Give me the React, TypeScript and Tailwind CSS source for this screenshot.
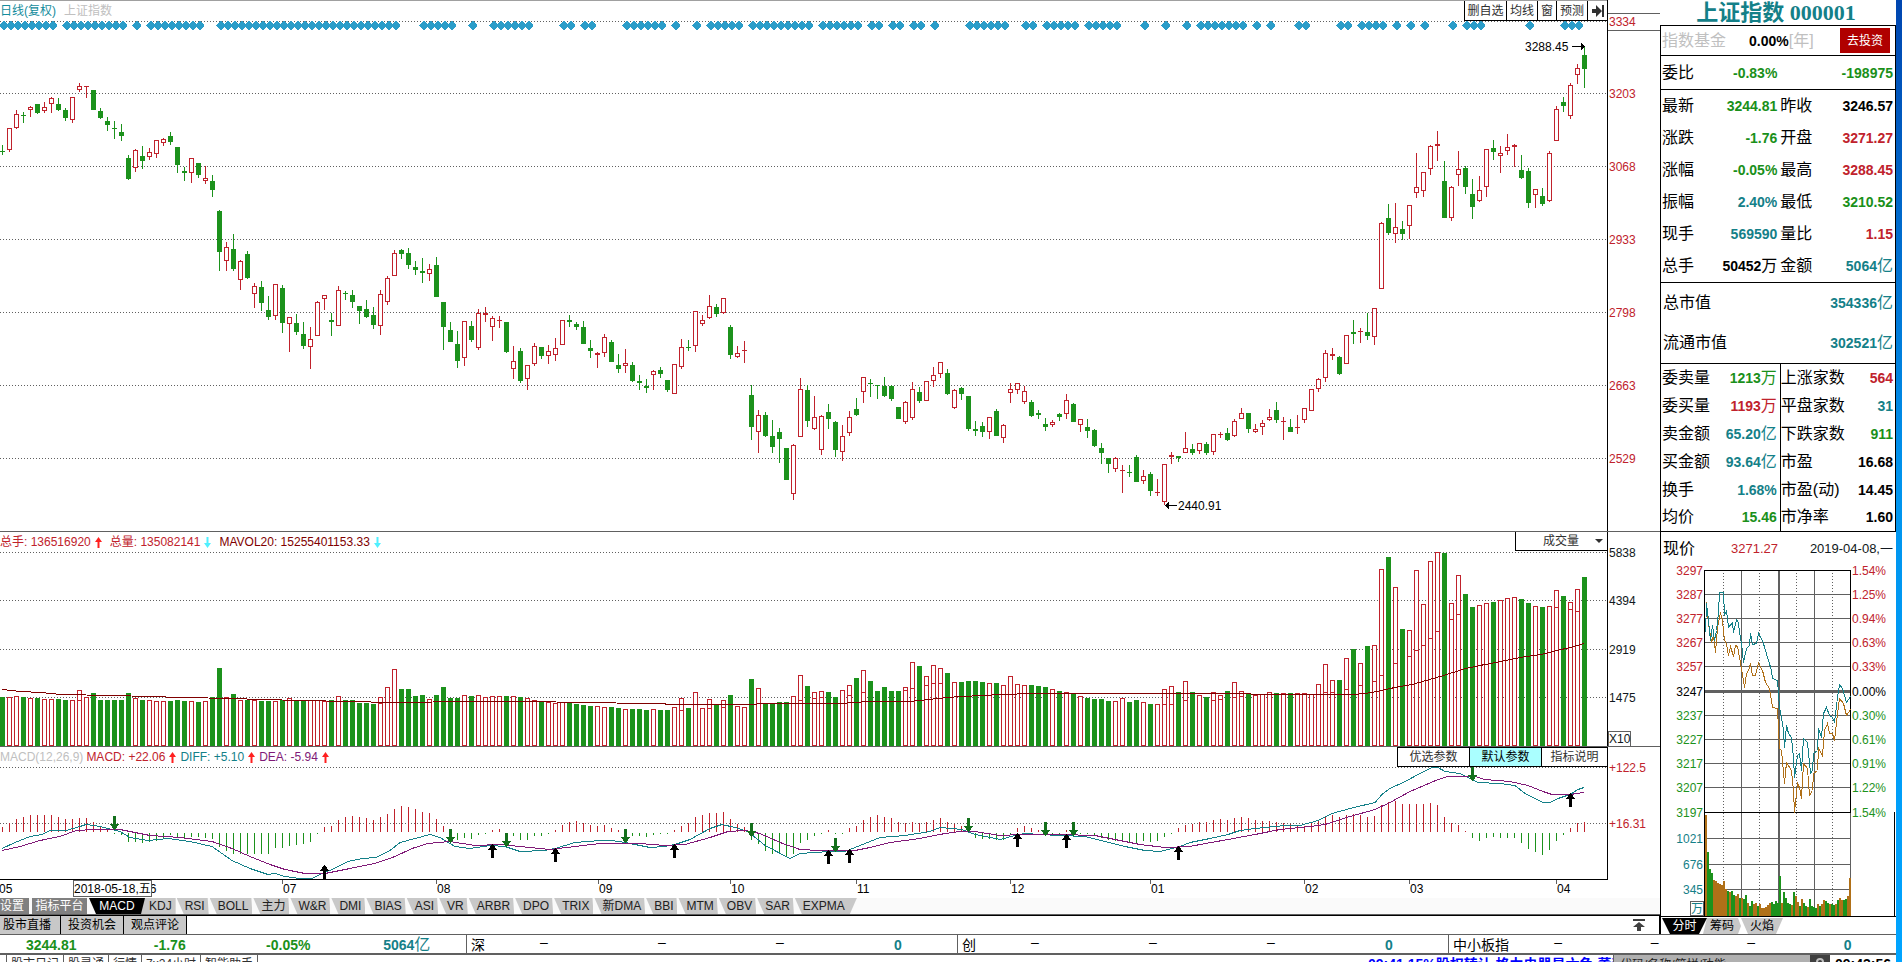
import React from "react";
import clsx from "clsx";

const RED = "#c0222c";
const GREEN = "#1c921c";
const TEAL = "#148088";
const PURPLE = "#801a78";
const GRID = "#606060";
const STEP = 7;

// one candle per trading day: colour, high, body top, body bottom, low
const CANDLES = `
g145,151,152,155 r128,128,150,152 r110,114,128,129 g112,115,116,123 r106,107,110,117 g104,104,113,114 r102,107,111,113 r97,98,104,113 g98,104,110,111 g108,110,118,121
r97,97,120,123 r83,86,90,92 r86,86,87,98 g90,90,110,110 g108,111,118,119 g117,121,125,131 g121,128,129,139 g124,132,136,141 g155,158,179,180 r149,150,168,172
g146,156,161,169 r148,152,157,160 r140,140,154,158 r138,139,143,146 g132,136,142,145 g147,147,165,173 g167,171,173,181 r158,158,173,183 g163,163,175,178 r166,178,181,184
g175,181,190,197 g210,211,252,271 r242,247,261,271 g234,249,269,271 r260,261,280,290 g251,254,278,279 r283,286,294,308 g281,287,303,311 g296,310,317,320 r284,284,316,320
g285,288,323,333 r317,317,324,352 g314,323,332,335 g322,334,346,349 r327,339,347,369 r301,302,336,336 r295,295,299,310 g313,320,322,336 r286,290,326,326 g291,293,294,300
g290,295,302,308 g306,306,311,324 g300,309,317,318 g307,315,325,329 r290,294,326,335 r276,278,302,305 r250,253,276,276 g249,250,254,259 g248,253,265,269 g261,267,270,275
g258,271,273,283 r264,269,274,281 g257,265,297,297 g302,302,327,350 g322,330,342,342 g331,344,361,368 r321,321,358,366 g321,326,340,342 r309,313,348,350 r307,313,315,322
r316,318,327,341 r316,320,321,328 g322,322,352,353 r346,361,369,379 g348,351,381,383 r365,365,379,390 r343,346,364,366 g347,347,356,359 r345,351,356,364 r338,348,355,361
r320,320,345,345 g315,320,322,327 g322,324,327,330 g321,327,344,344 g340,348,351,358 r352,353,355,368 r334,337,353,357 g340,342,362,362 g354,365,369,373 r349,363,366,373
g362,365,381,382 g375,381,383,390 g379,386,388,393 r370,371,375,390 g367,370,374,378 g380,380,390,392 r364,364,394,394 r339,347,367,369 g340,347,348,351 r311,311,346,352
r315,320,324,326 r295,306,318,319 g304,307,314,317 r298,298,313,314 g325,327,355,359 r346,353,357,358 r341,350,351,363 g385,395,427,440 r410,415,432,453 g412,415,436,437
g420,436,447,453 g428,432,439,463 g448,448,480,480 r444,445,494,500 r378,389,437,437 g385,390,421,427 r396,417,429,430 r415,416,450,455 g404,412,419,429 g421,422,450,457
r425,436,452,461 r411,417,433,436 g398,409,415,416 r377,377,392,403 g379,383,384,397 g385,385,386,399 g377,386,396,397 g385,386,399,401 g407,407,419,419 r401,402,422,424
r382,389,418,420 g387,392,401,403 r381,381,401,401 r367,375,381,387 r362,362,374,378 g369,373,394,395 r389,390,408,409 g387,388,394,400 g396,396,429,431 g421,429,431,436
g422,426,432,437 r417,417,432,439 g409,411,436,436 r424,425,438,443 r383,389,393,403 r383,383,390,394 r386,391,402,404 g400,402,416,417 g410,413,415,419 g418,424,427,431
r420,422,425,427 g413,414,417,421 r394,400,414,419 g403,404,422,422 r419,419,425,432 g419,427,431,438 g429,430,446,447 g443,448,453,464 g458,458,464,473 r457,458,469,472
r465,470,471,493 g465,472,473,477 g455,457,482,482 r470,476,481,484 g472,474,491,496 r479,492,493,496 r464,464,502,505 r452,455,457,464 g456,456,458,462 r432,448,453,453
g444,449,453,455 r443,443,451,454 g442,444,453,455 r434,434,452,455 r432,434,435,438 g428,433,440,441 r419,421,436,437 r408,413,419,419 g413,413,429,433 r424,429,432,433
r420,423,427,435 r409,417,420,421 g402,410,420,423 r417,421,422,440 g419,427,432,432 r415,427,428,434 r408,408,420,423 r389,389,411,411 r378,379,389,392 r350,353,378,382
r348,354,356,360 g356,357,374,375 r335,335,364,364 g320,332,334,344 r328,331,332,343 g313,332,336,340 r308,308,337,345 r222,223,289,289 g204,218,233,235 r203,227,234,243
g221,229,234,240 r205,205,226,239 r153,187,193,198 r172,172,191,197 r145,146,169,175 r131,144,146,161 g161,181,218,218 r186,187,218,221 r151,169,175,186 g166,168,187,194
g179,194,207,219 r176,190,201,202 r149,149,187,197 g140,148,152,160 r146,153,156,173 r134,147,151,155 r144,145,147,167 g155,170,178,179 g168,171,203,208 r189,189,195,208
g188,196,204,206 r151,153,201,202 r106,109,141,141 g97,102,106,112 r83,85,116,119 r64,68,75,84 g46,55,69,88`
  .trim()
  .split(/\s+/)
  .map((c) => {
    const [high, top, bottom, low] = c.slice(1).split(",").map(Number);
    return { up: c[0] === "r", high, top, bottom, low };
  });

const VOLUMES = [
  49, 49, 50, 49, 48, 48, 47, 47, 47, 46, 46, 56, 49, 53, 46, 46, 46, 46, 53, 48, 46, 46, 45, 45, 45, 46, 45, 45, 44, 45,
  49, 78, 49, 52, 46, 46, 46, 45, 45, 45, 46, 48, 45, 45, 46, 46, 45, 46, 50, 46, 46, 43, 43, 42, 49, 59, 77, 57, 57, 50,
  51, 47, 51, 59, 48, 48, 51, 50, 51, 49, 50, 50, 50, 50, 49, 48, 46, 45, 44, 43, 44, 43, 42, 41, 40, 40, 39, 39, 38, 37,
  37, 37, 36, 37, 36, 36, 39, 48, 38, 54, 38, 47, 42, 46, 51, 40, 39, 67, 58, 43, 43, 44, 44, 50, 71, 60, 54, 55, 54, 49,
  56, 61, 68, 76, 65, 55, 59, 55, 55, 59, 84, 80, 70, 81, 78, 73, 64, 64, 65, 65, 64, 63, 63, 61, 70, 62, 61, 61, 60, 59,
  57, 55, 54, 53, 50, 48, 47, 47, 45, 45, 48, 44, 46, 44, 42, 42, 57, 60, 54, 65, 54, 51, 49, 54, 51, 55, 64, 55, 53, 51,
  52, 54, 53, 53, 53, 53, 53, 52, 62, 82, 66, 66, 88, 97, 83, 100, 101, 177, 189, 159, 117, 116, 176, 142, 185, 194, 193,
  143, 171, 152, 139, 141, 143, 144, 146, 148, 149, 147, 143, 140, 139, 140, 156, 150, 144, 157, 169,
];

// marks inside the hollow bars
const VOLUME_MARKS: [number, number][] = [
  [11, 46], [54, 43], [55, 44], [97, 36], [99, 42], [101, 38], [103, 39], [114, 46], [116, 48], [117, 49], [121, 51],
  [123, 54], [129, 56], [130, 58], [132, 61], [133, 63], [134, 63], [144, 52], [166, 42], [167, 42], [169, 46], [173, 46],
  [174, 47], [176, 49], [177, 50], [189, 54], [190, 54], [192, 57], [194, 61], [196, 65], [197, 71], [199, 83], [201, 90],
  [202, 96], [203, 101], [204, 108], [205, 115], [207, 127], [208, 132], [222, 139], [224, 137], [225, 135],
];

const MACD = [
  5, 9, 13, 15, 17, 17, 17, 17, 15, 13, 13, 14, 14, 10, 6, 4, -1, -2, -9, -9, -10, -9, -8, -6, -2, -4, -5, -4, -4, -5,
  -6, -14, -18, -21, -21, -21, -21, -21, -21, -15, -15, -13, -12, -11, -9, -1, 5, 6, 12, 15, 16, 15, 14, 12, 15, 18, 23, 26,
  25, 23, 20, 19, 13, 6, -8, -7, -5, -6, -2, -1, 2, 3, -2, -3, -7, -7, -3, -3, -1, 2, 7, 10, 11, 9, 7, 6, 7, 4, 2, -2,
  -3, -3, -4, -2, -1, -1, 2, 6, 9, 15, 17, 19, 19, 20, 13, 8, 5, -7, -11, -18, -21, -21, -24, -21, -10, -7, -3, -1, 2, -1,
  -1, 4, 6, 12, 15, 17, 15, 14, 10, 9, 10, 9, 10, 12, 14, 10, 8, 6, 2, -5, -6, -6, -7, -7, -1, 4, 6, 4, 2, -2,
  -1, -1, 2, -2, -1, -1, -3, -5, -7, -8, -8, -9, -11, -8, -9, -8, -4, -1, 4, 7, 8, 10, 10, 12, 13, 12, 14, 15, 14, 12,
  11, 11, 10, 9, 8, 7, 6, 9, 12, 15, 17, 15, 17, 18, 17, 15, 16, 27, 30, 31, 28, 28, 28, 28, 29, 27, 15,
  9, 7, 1, -5, -8, -5, -4, -5, -5, -5, -10, -16, -19, -22, -17, -8, -2, 4, 9, 10,
];

// inclusive day ranges that carry an event diamond
const EVENTS: [number, number][] = [
  [0, 7], [9, 17], [19, 19], [21, 28], [31, 56], [60, 64], [67, 67], [70, 75], [80, 81], [83, 84], [89, 94], [96, 96],
  [99, 99], [101, 105], [107, 115], [117, 122], [124, 125], [127, 128], [130, 131], [133, 133], [138, 143], [146, 147],
  [149, 153], [155, 159], [163, 163], [166, 166], [169, 169], [171, 177], [179, 179], [181, 181], [185, 186], [191, 192],
  [194, 197], [199, 199], [201, 201], [203, 203], [207, 207], [209, 211], [218, 218], [223, 225],
];

const MAVOL =
  "2,157 12,158 20,159 41,160 50,161 62,162 110,163 152,164 180,165 236,166 258,167 306,168 346,169 396,170 470,169 520,169 592,170 640,171 663,171 668,172 725,172 790,171 840,171 868,169 908,169 920,168 938,166 960,164 985,163 1000,162 1035,161 1190,161 1216,161 1285,162 1355,162 1372,160 1390,156 1400,154 1412,152 1440,144 1466,136 1480,133 1506,128 1520,125 1541,122 1557,118 1570,115 1584,111";
const DIFF =
  "2,101 15,95 30,89 42,87 50,83 66,83 80,79 86,77 100,79 120,84 130,90 148,93 168,91 190,94 212,99 232,113 250,121 268,127 275,126 285,129 300,131 312,131 322,126 332,122 348,114 362,111 376,110 390,103 400,95 415,91 430,87 440,90 455,99 470,101 490,98 505,99 520,104 545,103 555,101 575,95 600,93 612,93 625,95 640,98 650,100 665,99 675,97 690,92 710,81 722,77 735,80 748,84 765,98 790,111 800,106 815,105 830,104 845,104 860,98 880,90 905,88 930,84 940,80 962,82 975,87 1000,92 1015,88 1025,86 1040,87 1060,88 1085,89 1105,94 1125,99 1145,103 1160,104 1180,99 1190,95 1210,91 1228,87 1240,83 1255,81 1285,78 1300,78 1318,73 1332,66 1350,61 1375,55 1382,47 1390,41 1405,34 1420,26 1432,20 1438,20 1445,24 1460,26 1466,29 1478,35 1500,36 1515,38 1525,46 1543,55 1550,55 1558,51 1570,47 1578,42 1584,40";
const DEA =
  "2,103 20,99 40,93 60,89 76,83 95,82 120,82 150,88 180,90 212,94 232,101 250,109 270,117 285,122 305,126 325,126 345,122 375,116 395,109 412,101 428,96 450,94 475,98 500,97 520,99 550,102 575,99 600,96 640,96 665,98 685,97 710,90 728,84 745,83 760,86 780,95 800,102 820,103 855,103 870,100 890,95 920,91 945,86 960,84 975,84 1000,88 1020,87 1060,87 1095,88 1120,93 1140,97 1165,100 1190,99 1200,97 1228,92 1255,87 1280,82 1310,79 1325,77 1350,69 1375,62 1390,55 1410,44 1438,32 1448,29 1475,29 1485,32 1510,34 1528,38 1543,44 1552,47 1570,47 1584,45";

// [day, tip]
const SELLS: [number, number][] = [
  [16, 83], [64, 96], [72, 100], [89, 96], [107, 90], [119, 105], [138, 85], [149, 89], [153, 89], [210, 34],
];
const BUYS: [number, number][] = [
  [46, 118], [70, 97], [79, 101], [96, 97], [118, 103], [121, 102], [145, 86], [152, 87], [168, 99], [224, 46],
];

const MONTHS: [string, number][] = [
  ["05", -2], ["06", 142], ["07", 282], ["08", 436], ["09", 598], ["10", 730], ["11", 856], ["12", 1010], ["01", 1150],
  ["02", 1304], ["03", 1409], ["04", 1556],
];

const PRICE_LEVELS: [string, number][] = [
  ["3334", 21], ["3203", 93], ["3068", 166], ["2933", 239], ["2798", 312], ["2663", 385], ["2529", 458],
];
const VOLUME_LEVELS: [string, number][] = [["5838", 20], ["4394", 68], ["2919", 117], ["1475", 165]];
const MACD_LEVELS: [string, number][] = [["+122.5", 20], ["+16.31", 76]];

const INDICATORS = [
  "KDJ", "RSI", "BOLL", "主力", "W&R", "DMI", "BIAS", "ASI", "VR", "ARBR", "DPO", "TRIX", "新DMA", "BBI", "MTM", "OBV",
  "SAR", "EXPMA",
];

function GridLines({ levels }: { levels: [string, number][] }) {
  return (
    <g stroke={GRID} strokeDasharray="1 2">
      {levels.map(([label, y]) => (
        <line key={label} x1="0" x2="100%" y1={y + 0.5} y2={y + 0.5} />
      ))}
    </g>
  );
}

function AxisLabels({ levels, color }: { levels: [string, number][]; color: string }) {
  return (
    <g fill={color} fontSize="12">
      {levels.map(([label, y]) => (
        <text key={label} x="1" y={y + 5}>
          {label}
        </text>
      ))}
    </g>
  );
}

function Trend({ down, className }: { down?: boolean; className: string }) {
  return (
    <svg className={clsx("w-[7px] h-[11px] shrink-0", className)} viewBox="0 0 7 11" fill="currentColor">
      {down ? <path d="M2.500 0h2v6H7L3.500 11 0 6h2.500z" /> : <path d="M3.500 0 7 5H4.500V11h-2V5H0z" />}
    </svg>
  );
}

function PriceChart() {
  return (
    <svg className="block w-full h-[531px]" shapeRendering="crispEdges">
      <rect width="100%" height="1" fill="#a0a0a0" />
      <GridLines levels={PRICE_LEVELS} />
      <g fill="#2b9dc9">
        {EVENTS.flatMap(([from, to]) =>
          Array.from({ length: to - from + 1 }, (_, n) => {
            const x = (from + n) * STEP;
            return <path key={x} d={`M${x + 3} 21h1l4 4v1l-4 4h-1l-4-4v-1z`} />;
          })
        )}
      </g>
      {CANDLES.map(({ up, high, top, bottom, low }, i) => {
        const x = i * STEP;
        const color = up ? RED : GREEN;
        const hollow = up && bottom - top > 2;
        return (
          <g key={i} fill={color}>
            <rect x={x + 2} y={high} width="1" height={low - high} />
            <rect x={x} y={top} width="5" height={bottom - top} />
            {hollow && <rect x={x + 1} y={top + 1} width="3" height={bottom - top - 2} fill="#fff" />}
          </g>
        );
      })}
      <g fontSize="12">
        <text x="1525" y="51">3288.45</text>
        <text x="1178" y="510">2440.91</text>
      </g>
      <path d="M1572 46h9v-3l4 3.500-4 3.500v-3h-9z" />
      <path d="M1177 505h-8v-3l-4 3.500 4 3.500v-3h8z" />
    </svg>
  );
}

function VolumeChart() {
  return (
    <svg className="block w-full h-[214px]" shapeRendering="crispEdges">
      <GridLines levels={VOLUME_LEVELS} />
      {VOLUMES.map((h, i) => {
        const x = i * STEP;
        const up = CANDLES[i]?.up;
        return (
          <g key={i}>
            <rect x={x} y={214 - h} width="5" height={h} fill={up ? RED : GREEN} />
            {up && <rect x={x + 1} y={215 - h} width="3" height={h - 2} fill="#fff" />}
          </g>
        );
      })}
      {VOLUME_MARKS.map(([i, h]) => (
        <rect key={i} x={i * STEP} y={214 - h} width="5" height="1" fill={RED} />
      ))}
      <polyline points={MAVOL} fill="none" stroke="#800000" transform="translate(0 0.5)" />
    </svg>
  );
}

function MacdChart() {
  return (
    <svg className="block w-full h-[132px]" shapeRendering="crispEdges">
      <GridLines levels={MACD_LEVELS} />
      {MACD.map((v, i) => (
        <rect
          key={i}
          x={i * STEP + 2}
          y={v > 0 ? 85 - v : 86}
          width="1"
          height={Math.abs(v)}
          fill={v > 0 ? RED : GREEN}
        />
      ))}
      <g fill="none" transform="translate(0 0.5)">
        <polyline points={DIFF} stroke={TEAL} />
        <polyline points={DEA} stroke={PURPLE} />
      </g>
      {SELLS.map(([i, y]) => (
        <path key={i} d={`M${i * STEP + 1} ${y - 14}h3v8h3l-4 6h-1l-4-6h3z`} fill="#14701c" />
      ))}
      {BUYS.map(([i, y]) => (
        <path key={i} d={`M${i * STEP + 1} ${y + 14}h3v-8h3l-4-6h-1l-4 6h3z`} fill="#000" />
      ))}
    </svg>
  );
}

function DateAxis() {
  return (
    <div className="relative h-[18px]">
      <svg className="block w-full h-full" fontSize="12">
        {MONTHS.map(([label, x]) => (
          <g key={label}>
            <rect x={x} width="1" height="4" fill={GRID} />
            <text x={x + 1} y="13">{label}</text>
          </g>
        ))}
      </svg>
      <div className="absolute left-[73px] top-0 h-[17px] border border-[#606060] bg-white leading-[16px] whitespace-nowrap">
        2018-05-18,五
      </div>
    </div>
  );
}

function ChartArea() {
  return (
    <>
      <section className="flex border-b border-[#606060]">
        <div className="relative flex-1 min-w-0 border-r border-black">
          <PriceChart />
          <div className="absolute left-0 top-[3px] flex gap-2 leading-4">
            <span className="text-[#148c9c]">日线(复权)</span>
            <span className="text-[#c0c0c0]">上证指数</span>
          </div>
          <div className="absolute right-0 top-px flex h-5 border-l border-b border-black bg-white text-[#303030] divide-x divide-black">
            <button className="w-[42px]">删自选</button>
            <button className="w-[31px]">均线</button>
            <button className="w-[19px]">窗</button>
            <button className="w-[31px]">预测</button>
            <button className="w-[19px] flex items-center justify-center" aria-label="最新">
              <svg className="w-3 h-3" viewBox="0 0 12 12" fill="#303030">
                <path d="M0 4h4V0l6 6-6 6V8H0zM10 0h2v12h-2z" />
              </svg>
            </button>
          </div>
        </div>
        <svg className="w-[52px] h-[531px]">
          <path d="M0 13.500h52M0 30.500h52" stroke={GRID} />
          <AxisLabels levels={PRICE_LEVELS} color={RED} />
        </svg>
      </section>

      <section className="flex border-b border-[#606060]">
        <div className="relative flex-1 min-w-0 border-r border-black">
          <VolumeChart />
          <div className="absolute left-0 top-[2px] flex items-center leading-4 whitespace-nowrap">
            <span className="text-[#c0222c]">总手: 136516920</span>
            <Trend className="text-[#ff2020] mx-1" />
            <span className="text-[#c0222c] ml-1">总量: 135082141</span>
            <Trend down className="text-[#50f0ff] mx-1" />
            <span className="text-[#800000] ml-1">MAVOL20: 15255401153.33</span>
            <Trend down className="text-[#50f0ff] mx-1" />
          </div>
          <div className="absolute right-0 top-0 w-[92px] h-[19px] border-l border-b border-black bg-white">
            <select
              aria-label="副图指标"
              className="block w-full h-full appearance-none bg-transparent pl-[27px] text-[#303030] outline-none"
            >
              <option>成交量</option>
            </select>
            <svg className="absolute right-1 top-[7px] w-2 h-1" viewBox="0 0 8 4" fill="#303030">
              <path d="M0 0h8L4 4z" />
            </svg>
          </div>
        </div>
        <div className="relative w-[52px]">
          <svg className="w-full h-[214px]">
            <AxisLabels levels={VOLUME_LEVELS} color="#101820" />
          </svg>
          <span className="absolute left-0 bottom-0 border border-b-0 border-[#606060] text-[#101820] leading-[14px]">X10</span>
        </div>
      </section>

      <section className="flex">
        <div className="relative flex-1 min-w-0 border-r border-b border-black">
          <MacdChart />
          <div className="absolute left-0 top-[2px] flex items-center leading-4 whitespace-nowrap">
            <span className="text-[#c0c0c0] mr-[3px]">MACD(12,26,9)</span>
            <span className="text-[#c0222c]">MACD: +22.06</span>
            <Trend className="text-[#ff2020] mx-1" />
            <span className="text-[#148088]">DIFF: +5.10</span>
            <Trend className="text-[#ff2020] mx-1" />
            <span className="text-[#801a78]">DEA: -5.94</span>
            <Trend className="text-[#ff2020] mx-1" />
          </div>
          <div className="absolute right-0 top-0 flex h-5 border-l border-b border-t border-black bg-white text-[#303030] divide-x divide-black">
            <button className="w-[72px]">优选参数</button>
            <button className="w-[72px] bg-[#aaffff] text-black">默认参数</button>
            <button className="w-[65px]">指标说明</button>
          </div>
        </div>
        <svg className="w-[52px] h-[132px]">
          <AxisLabels levels={MACD_LEVELS} color={RED} />
        </svg>
      </section>
      <DateAxis />
    </>
  );
}

function IndicatorTabs() {
  return (
    <div className="flex h-4 leading-4 bg-[#fafafa]">
      <button className="w-[29px] bg-[#808080] text-white text-left">设置</button>
      <button className="ml-[3px] w-[55px] bg-[#808080] text-white">指标平台</button>
      <button className="relative z-10 ml-[2px] w-[56px] bg-black text-white [clip-path:polygon(0_0,100%_0,calc(100%-4px)_100%,7px_100%)]">
        MACD
      </button>
      {INDICATORS.map((name, i) => (
        <button
          key={name}
          className={clsx(
            "bg-[#c8c8c8] text-[#202020]",
            i === 0 && "-ml-1 pl-2 pr-1 [clip-path:polygon(0_0,100%_0,100%_100%,0_100%)]",
            i > 0 && i < INDICATORS.length - 1 && "ml-px pl-2 pr-1 [clip-path:polygon(0_0,calc(100%-1px)_0,100%_100%,7px_100%)]",
            i === INDICATORS.length - 1 && "ml-px pl-2 pr-3 [clip-path:polygon(0_0,100%_0,calc(100%-7px)_100%,7px_100%)]"
          )}
        >
          {name}
        </button>
      ))}
    </div>
  );
}

const tone = {
  g: "text-[#1a901a]",
  r: "text-[#c0222c]",
  t: "text-[#148088]",
  k: "text-black",
};
type Tone = keyof typeof tone;

function Figure({ value, color }: { value: string; color: Tone }) {
  const unit = value.match(/[万亿]$/)?.[0];
  return (
    <span className={clsx("text-sm font-bold whitespace-nowrap", tone[color])}>
      {unit ? value.slice(0, -1) : value}
      {unit && <span className="text-base leading-none font-normal">{unit}</span>}
    </span>
  );
}

type Row = [string, string, Tone, string, string, Tone];

const QUOTES: Row[] = [
  ["最新", "3244.81", "g", "昨收", "3246.57", "k"],
  ["涨跌", "-1.76", "g", "开盘", "3271.27", "r"],
  ["涨幅", "-0.05%", "g", "最高", "3288.45", "r"],
  ["振幅", "2.40%", "t", "最低", "3210.52", "g"],
  ["现手", "569590", "t", "量比", "1.15", "r"],
  ["总手", "50452万", "k", "金额", "5064亿", "t"],
];

const BREADTH: Row[] = [
  ["委卖量", "1213万", "g", "上涨家数", "564", "r"],
  ["委买量", "1193万", "r", "平盘家数", "31", "t"],
  ["卖金额", "65.20亿", "t", "下跌家数", "911", "g"],
  ["买金额", "93.64亿", "t", "市盈", "16.68", "k"],
  ["换手", "1.68%", "t", "市盈(动)", "14.45", "k"],
  ["均价", "15.46", "g", "市净率", "1.60", "k"],
];

function QuoteTable({ rows, rowClass, split }: { rows: Row[]; rowClass: string; split?: boolean }) {
  return (
    <table className="w-full table-fixed border-b border-black">
      <tbody>
        {rows.map(([a, av, ac, b, bv, bc]) => (
          <tr key={a} className={clsx("text-base leading-none", rowClass)}>
            <th scope="row" className="w-[22%] pl-px text-left font-normal whitespace-nowrap">{a}</th>
            <td className="w-[29%] pr-[3px]">
              <div className="flex justify-end items-center"><Figure value={av} color={ac} /></div>
            </td>
            <th scope="row" className={clsx("w-[28%] text-left font-normal whitespace-nowrap", split && "border-l border-black")}>{b}</th>
            <td className="w-[21%] pr-[2px]">
              <div className="flex justify-end items-center"><Figure value={bv} color={bc} /></div>
            </td>
          </tr>
        ))}
      </tbody>
    </table>
  );
}

const INTRADAY_LEVELS: [string, string, number, string][] = [
  ["3297", "1.54%", 8, RED],
  ["3287", "1.25%", 32, RED],
  ["3277", "0.94%", 56, RED],
  ["3267", "0.63%", 80, RED],
  ["3257", "0.33%", 104, RED],
  ["3247", "0.00%", 129, "#000"],
  ["3237", "0.30%", 153, GREEN],
  ["3227", "0.61%", 177, GREEN],
  ["3217", "0.91%", 201, GREEN],
  ["3207", "1.22%", 225, GREEN],
  ["3197", "1.54%", 250, GREEN],
  ["1021", "", 276, TEAL],
  ["676", "", 302, TEAL],
  ["345", "", 327, TEAL],
];

const INDEX_LINE =
  "44,70 45,41 47,58 49,78 51,63 53,78 55,68 57,50 58,30 62,30 63,53 65,48 67,65 71,60 72,70 75,57 77,60 78,70 80,81 82,100 85,86 88,83 89,71 91,82 95,81 97,71 101,78 104,88 107,98 110,108 111,116 116,118 118,145 120,155 122,168 123,185 125,163 127,171 130,175 132,195 133,215 136,193 138,191 140,208 142,176 146,180 149,211 151,208 152,191 156,188 157,166 160,175 162,151 165,145 168,153 171,155 173,160 176,135 178,122 181,126 185,140 189,134";
const LEAD_LINE =
  "45,40 47,61 50,80 52,73 54,90 56,65 59,50 61,58 63,78 65,81 67,93 69,84 72,94 74,83 76,84 78,95 80,106 83,125 85,111 87,108 89,101 91,113 94,113 97,101 101,108 104,120 108,126 111,145 116,146 118,186 120,188 123,221 125,200 130,208 132,228 133,250 136,221 138,225 140,236 142,201 146,206 148,233 151,228 152,211 156,208 157,186 161,193 163,168 166,161 168,171 171,171 173,178 176,151 178,136 182,141 185,153 189,147";

const INTRADAY_VOLUMES = [
  101, 64, 47, 43, 36, 35, 33, 32, 31, 35, 27, 25, 24, 25, 21, 20, 22, 18, 18, 17, 21, 13, 10, 15, 12, 13, 10, 12, 8, 8,
  9, 11, 13, 14, 12, 15, 13, 40, 13, 24, 18, 13, 12, 11, 24, 20, 14, 10, 17, 13, 10, 9, 17, 10, 9, 8, 12, 10, 12, 16,
  15, 13, 12, 12, 11, 12, 16, 18, 16, 16, 17, 20, 38,
];
const INTRADAY_UP = "1000111111101001101001001101111110000010000101101001000010110010010110011";

function IntradayChart() {
  return (
    <svg className="block w-full h-[354px]" shapeRendering="crispEdges">
      <g fill={GRID}>
        {INTRADAY_LEVELS.map(([label, , y]) => (
          <rect key={label} x="44" y={label === "3247" ? y - 1 : y} width="146" height={label === "3247" ? 3 : 1} />
        ))}
        <rect x="80" y="8" width="1" height="346" />
        <rect x="117" y="8" width="2" height="346" />
        <rect x="153" y="8" width="1" height="346" />
        <rect x="189" y="8" width="1" height="346" />
      </g>
      <path d="M62.500 8v346M98.500 8v346M135.500 8v346M171.500 8v346" stroke={GRID} strokeDasharray="1 2" />
      <path d="M43.500 354V8.500H189.500V250.500H43.500M233.500 250V354" fill="none" stroke="#000" />
      <g fontSize="12">
        {INTRADAY_LEVELS.map(([label, percent, y, color]) => (
          <g key={label} fill={color}>
            <text x="42" y={y + 5} textAnchor="end">{label}</text>
            <text x="191" y={y + 5}>{percent}</text>
          </g>
        ))}
        <rect x="29.500" y="339.500" width="13" height="14" fill="none" stroke={GRID} />
        <text x="30" y="351" fill={TEAL}>万</text>
      </g>
      {INTRADAY_VOLUMES.map((h, i) => (
        <rect key={i} x={44 + i * 2} y={354 - h} width="2" height={h} fill={INTRADAY_UP[i] === "1" ? "#b07018" : GREEN} />
      ))}
      <g fill="none" transform="translate(0.5 0.5)">
        <polyline points={LEAD_LINE} stroke="#b07018" />
        <polyline points={INDEX_LINE} stroke={TEAL} />
      </g>
    </svg>
  );
}

function QuotePanel() {
  return (
    <aside className="w-[236px] shrink-0 flex flex-col">
      <h1 className="h-[25px] leading-[25px] pr-1 text-[22px] text-center text-[#148088] font-bold whitespace-nowrap font-['Liberation_Serif','Noto_Sans_CJK_SC',serif]">
        上证指数 000001
      </h1>
      <div className="border-l border-black">
        <div className="border-r border-t border-black text-base leading-none">
          <div className="flex items-center h-[30px] pl-px border-b border-black text-[#c0c0c0]">
            <span className="w-[87px]">指数基金</span>
            <Figure value="0.00%" color="k" />
            <span>[年]</span>
            <button className="ml-auto mr-[5px] w-[50px] h-[25px] bg-[#b00000] text-white text-xs">去投资</button>
          </div>
          <div className="flex items-center h-[34px] border-b border-black pl-px pr-[2px]">
            <span className="w-[71px]">委比</span>
            <Figure value="-0.83%" color="g" />
            <span className="ml-auto"><Figure value="-198975" color="g" /></span>
          </div>
          <QuoteTable rows={QUOTES} rowClass="h-8" />
          <div className="border-b border-black px-[2px]">
            <div className="flex items-center justify-between h-10">
              总市值 <Figure value="354336亿" color="t" />
            </div>
            <div className="flex items-center justify-between h-10">
              流通市值 <Figure value="302521亿" color="t" />
            </div>
          </div>
          <QuoteTable rows={BREADTH} rowClass="h-7" split />
        </div>
        <div className="flex items-center h-[30px] pt-1 pl-[2px] pr-[3px] text-[13px]">
          <span className="text-base">现价</span>
          <span className="ml-9 text-[#c0222c]">3271.27</span>
          <span className="ml-auto text-[#101820]">2019-04-08,一</span>
        </div>
        <IntradayChart />
      </div>
      <div className="flex h-[18px] border-t border-l border-black pl-px pt-px leading-4">
        <button className="relative z-10 w-[45px] bg-black text-white [clip-path:polygon(0_0,100%_0,calc(100%-8px)_100%,8px_100%)]">
          分时
        </button>
        <button className="-ml-1 w-[38px] bg-[#c8c8c8] [clip-path:polygon(4px_0,calc(100%-3px)_0,100%_50%,calc(100%-3px)_100%,0_100%)]">
          筹码
        </button>
        <button className="w-[42px] bg-[#c8c8c8] [clip-path:polygon(0_0,100%_0,calc(100%-7px)_100%,7px_100%)]">
          火焰
        </button>
      </div>
    </aside>
  );
}

function TickerGroup({ label, wide }: { label: string; wide?: boolean }) {
  return (
    <div className="flex items-center border-l border-[#606060]">
      <span className={clsx("text-sm pl-1 whitespace-nowrap", wide ? "w-[61px]" : "w-[18px]")}>{label}</span>
      <div className="flex-1 grid grid-cols-4 text-center text-sm leading-none">
        <span>–</span>
        <span>–</span>
        <span>–</span>
        <Figure value="0" color="t" />
      </div>
    </div>
  );
}

function Ticker() {
  return (
    <div className="grid grid-cols-[466fr_491fr_491fr_448fr] h-5 border-b-2 border-[#606060]">
      <div className="grid grid-cols-4 items-center text-center leading-none -ml-2">
        <Figure value="3244.81" color="g" />
        <Figure value="-1.76" color="g" />
        <Figure value="-0.05%" color="g" />
        <Figure value="5064亿" color="t" />
      </div>
      <TickerGroup label="深" />
      <TickerGroup label="创" />
      <TickerGroup label="中小板指" wide />
    </div>
  );
}

function StatusBar() {
  return (
    <footer className="flex h-5 leading-[18px] whitespace-nowrap">
      <div className="flex divide-x divide-[#606060] border-r border-[#606060] text-[#303030]">
        <span className="w-[7px]" />
        <a href="#" className="px-1">股市日记</a>
        <a href="#" className="px-1">股灵通</a>
        <a href="#" className="px-1">行情</a>
        <a href="#" className="px-1">7x24小时</a>
        <a href="#" className="px-1">智能助手</a>
      </div>
      <a href="#" className="ml-auto w-[245px] overflow-hidden text-sm leading-[18px] font-bold text-[#0000ff]">
        09:41 15%股权转让 格力电器显六鱼 董秘
      </a>
      <label className="flex w-[217px] bg-[#b0b0b0] border-l border-[#606060]">
        <input
          aria-label="搜索"
          placeholder="代码/名称/简拼/功能"
          className="flex-1 min-w-0 bg-transparent pl-[6px] placeholder:text-[#202020] outline-none"
        />
        <span className="w-5 bg-[#404040] flex justify-center pt-[2px]">
          <svg className="w-[10px] h-[10px]" viewBox="0 0 10 10" fill="none" stroke="#c0c0c0" strokeWidth="2">
            <circle cx="5" cy="5" r="3" />
          </svg>
        </span>
      </label>
      <time className="w-[66px] pl-[5px] text-sm leading-[18px] font-bold">09:43:56</time>
    </footer>
  );
}

export default function App() {
  return (
    <div className="flex h-screen overflow-hidden bg-white text-black text-xs font-['Liberation_Sans','Noto_Sans_CJK_SC',sans-serif]">
      <div className="flex-1 min-w-0">
        <div className="flex border-b border-[#606060]">
          <main className="flex-1 min-w-0">
            <ChartArea />
            <IndicatorTabs />
            <div className="flex h-5 border-t border-[#606060]">
              <div className="flex flex-1 border-t border-r border-black leading-[17px]">
                <button className="w-[61px] bg-[#c8c8c8] border-r border-black text-left pl-[3px]">股市直播</button>
                <button className="w-[63px] bg-[#c8c8c8] border-r border-black">投资机会</button>
                <button className="w-[63px] bg-[#c8c8c8] border-r border-black">观点评论</button>
                <button className="ml-auto mr-[14px]" aria-label="展开">
                  <svg className="w-3 h-3" viewBox="0 0 12 12" fill="#404040">
                    <path d="M0 0h12v2H0zM6 3l6 5H8v4H4V8H0z" />
                  </svg>
                </button>
              </div>
            </div>
          </main>
          <QuotePanel />
        </div>
        <Ticker />
        <StatusBar />
      </div>
      <div className="w-[6px] shrink-0 bg-linear-to-b from-[#0046b0] via-[#0094ee] to-[#00a4ff]" />
    </div>
  );
}
